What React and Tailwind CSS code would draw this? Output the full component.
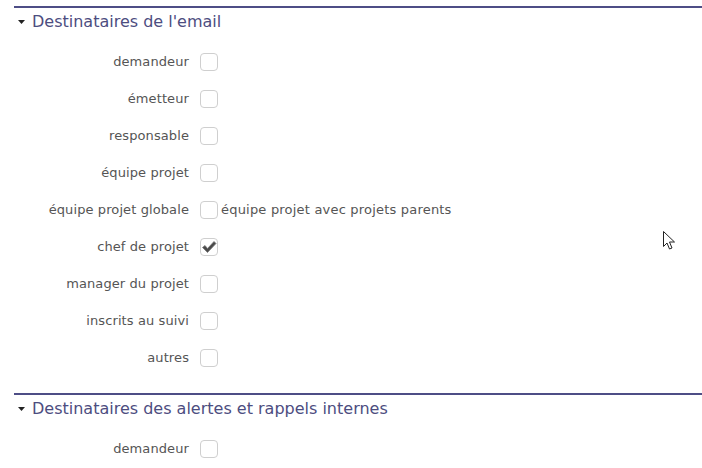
import React from "react";

const rows1 = [
  { label: "demandeur" },
  { label: "émetteur" },
  { label: "responsable" },
  { label: "équipe projet" },
  { label: "équipe projet globale", extra: "équipe projet avec projets parents" },
  { label: "chef de projet", checked: true },
  { label: "manager du projet" },
  { label: "inscrits au suivi" },
  { label: "autres" },
];

const rows2 = [{ label: "demandeur" }];

function Box({ checked }) {
  return (
    <div className="w-[18px] h-[18px] rounded-[4px] border border-[#cfcfcf] bg-white flex items-center justify-center shrink-0">
      {checked && (
        <svg width="16" height="14" viewBox="0 0 16 14">
          <path
            d="M1.5 7.5 L4 5.5 L6.5 8.5 L13 1.5 L15 3.5 L6.5 12.5 Z"
            fill="#4a4a4a"
            stroke="#777"
            strokeWidth="0.8"
            strokeLinejoin="round"
          />
        </svg>
      )}
    </div>
  );
}

function Row({ label, checked, extra }) {
  return (
    <div className="h-[37px] flex items-center">
      <div className="w-[175px] text-right text-[13px] text-[#555555] tracking-[0.1px]">{label}</div>
      <div className="ml-[11px] flex items-center">
        <Box checked={checked} />
        {extra && (
          <span className="ml-[3px] text-[13px] text-[#555555] tracking-[0.2px]">{extra}</span>
        )}
      </div>
    </div>
  );
}

function Section({ title, rows, className }) {
  return (
    <div className={"border-t-2 border-[#4e4e86] " + (className || "")}>
      <div className="h-[28px] flex items-center pl-[4px]">
        <svg width="7" height="4" viewBox="0 0 7 4" className="shrink-0">
          <path d="M0 0 H7 L3.5 4 Z" fill="#222" />
        </svg>
        <span className="ml-[7px] text-[16px] text-[#4d4d80] leading-none">{title}</span>
      </div>
      <div className="pt-[7px]">
        {rows.map((r, i) => (
          <Row key={i} {...r} />
        ))}
      </div>
    </div>
  );
}

export default function App() {
  return (
    <div
      className="relative w-[702px] h-[468px] overflow-hidden bg-white pt-[6px] pl-[14px]"
      style={{ fontFamily: '"DejaVu Sans", Verdana, sans-serif' }}
    >
      <Section title="Destinataires de l'email" rows={rows1} className="mb-[17px]" />
      <Section title="Destinataires des alertes et rappels internes" rows={rows2} />
      <svg
        className="absolute left-[663px] top-[231px]"
        width="13"
        height="20"
        viewBox="0 0 13 20"
      >
        <path
          d="M0.5 0.5 L0.5 15.5 L4 12 L6.5 18 L9 17 L6.5 11 L11.5 11 Z"
          fill="white"
          stroke="#222"
          strokeWidth="1"
          strokeLinejoin="miter"
        />
      </svg>
    </div>
  );
}
